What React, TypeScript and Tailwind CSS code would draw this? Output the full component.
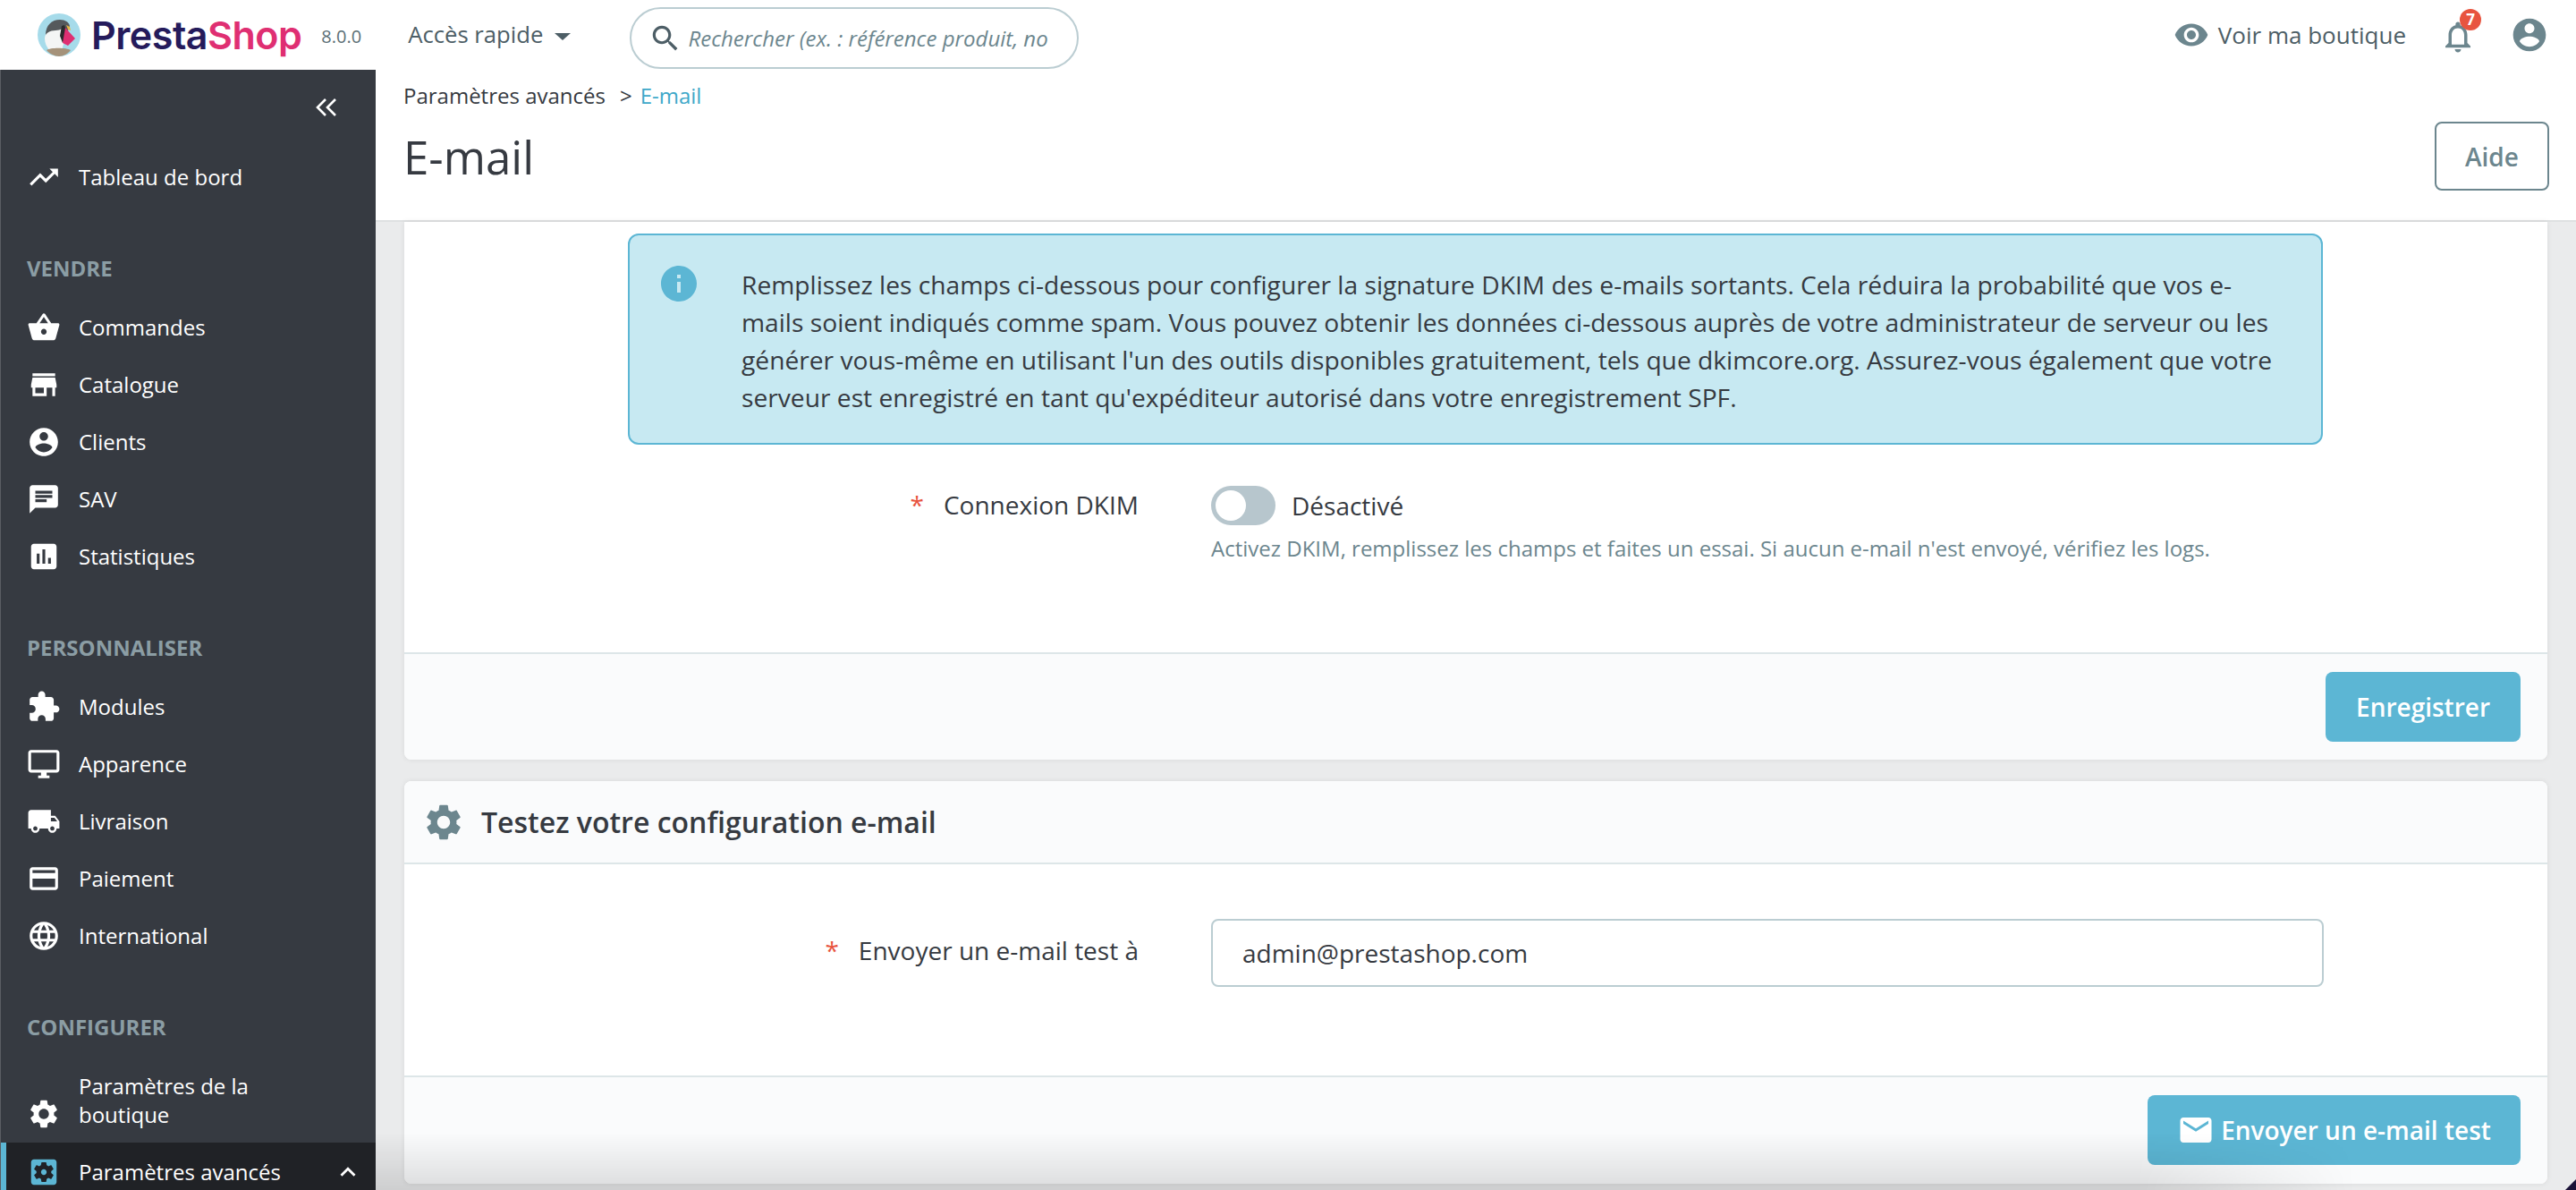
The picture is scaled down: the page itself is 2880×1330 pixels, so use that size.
import React from 'react';

const ICONS = {
  trending: 'M16 6l2.29 2.29-4.88 4.88-4-4L2 16.59 3.41 18l6-6 4 4 6.3-6.29L22 12V6z',
  basket: 'M17.21 9l-4.38-6.56c-.19-.28-.51-.42-.83-.42-.32 0-.64.14-.83.43L6.79 9H2c-.55 0-1 .45-1 1 0 .09.01.18.04.27l2.54 9.27c.23.84 1 1.46 1.92 1.46h13c.92 0 1.69-.62 1.93-1.46l2.54-9.27L23 10c0-.55-.45-1-1-1h-4.79zM9 9l3-4.4L15 9H9zm3 8c-1.1 0-2-.9-2-2s.9-2 2-2 2 .9 2 2-.9 2-2 2z',
  store: 'M20 4H4v2h16V4zm1 10v-2l-1-5H4l-1 5v2h1v6h10v-6h4v6h2v-6h1zm-9 4H6v-4h6v4z',
  account: 'M12 2C6.48 2 2 6.48 2 12s4.48 10 10 10 10-4.48 10-10S17.52 2 12 2zm0 3c1.66 0 3 1.34 3 3s-1.34 3-3 3-3-1.34-3-3 1.34-3 3-3zm0 14.2c-2.5 0-4.71-1.28-6-3.22.03-1.99 4-3.08 6-3.08 1.99 0 5.97 1.09 6 3.08-1.29 1.94-3.5 3.22-6 3.22z',
  chat: 'M20 2H4c-1.1 0-1.99.9-1.99 2L2 22l4-4h14c1.1 0 2-.9 2-2V4c0-1.1-.9-2-2-2zM6 9h12v2H6V9zm8 5H6v-2h8v2zm4-6H6V6h12v2z',
  stats: 'M19 3H5c-1.1 0-2 .9-2 2v14c0 1.1.9 2 2 2h14c1.1 0 2-.9 2-2V5c0-1.1-.9-2-2-2zM9 17H7v-7h2v7zm4 0h-2V7h2v10zm4 0h-2v-4h2v4z',
  puzzle: 'M20.5 11H19V7c0-1.1-.9-2-2-2h-4V3.5C13 2.12 11.88 1 10.5 1S8 2.12 8 3.5V5H4c-1.1 0-1.99.9-1.99 2v3.8H3.5c1.49 0 2.7 1.21 2.7 2.7s-1.21 2.7-2.7 2.7H2V20c0 1.1.9 2 2 2h3.8v-1.5c0-1.49 1.21-2.7 2.7-2.7 1.49 0 2.7 1.21 2.7 2.7V22H17c1.1 0 2-.9 2-2v-4h1.5c1.38 0 2.5-1.12 2.5-2.5S21.88 11 20.5 11z',
  desktop: 'M21 2H3c-1.1 0-2 .9-2 2v12c0 1.1.9 2 2 2h7v2H8v2h8v-2h-2v-2h7c1.1 0 2-.9 2-2V4c0-1.1-.9-2-2-2zm0 14H3V4h18v12z',
  truck: 'M20 8h-3V4H3c-1.1 0-2 .9-2 2v11h2c0 1.66 1.34 3 3 3s3-1.34 3-3h6c0 1.66 1.34 3 3 3s3-1.34 3-3h2v-5l-3-4zM6 18.5c-.83 0-1.5-.67-1.5-1.5s.67-1.5 1.5-1.5 1.5.67 1.5 1.5-.67 1.5-1.5 1.5zm13.5-9l1.96 2.5H17V9.5h2.5zm-1.5 9c-.83 0-1.5-.67-1.5-1.5s.67-1.5 1.5-1.5 1.5.67 1.5 1.5-.67 1.5-1.5 1.5z',
  card: 'M20 4H4c-1.11 0-1.99.89-1.99 2L2 18c0 1.11.89 2 2 2h16c1.11 0 2-.89 2-2V6c0-1.11-.89-2-2-2zm0 14H4v-6h16v6zm0-10H4V6h16v2z',
  globe: 'M11.99 2C6.47 2 2 6.48 2 12s4.47 10 9.99 10C17.52 22 22 17.52 22 12S17.52 2 11.99 2zm6.93 6h-2.95c-.32-1.25-.78-2.45-1.38-3.56 1.84.63 3.37 1.91 4.33 3.56zM12 4.04c.83 1.2 1.48 2.53 1.91 3.96h-3.82c.43-1.43 1.08-2.76 1.91-3.96zM4.26 14C4.1 13.36 4 12.69 4 12s.1-1.36.26-2h3.38c-.08.66-.14 1.32-.14 2 0 .68.06 1.34.14 2H4.26zm.82 2h2.95c.32 1.25.78 2.45 1.38 3.56-1.84-.63-3.37-1.9-4.33-3.56zm2.95-8H5.08c.96-1.66 2.49-2.93 4.33-3.56C8.81 5.55 8.35 6.75 8.03 8zM12 19.96c-.83-1.2-1.48-2.53-1.91-3.96h3.82c-.43 1.43-1.08 2.76-1.91 3.96zM14.34 14H9.66c-.09-.66-.16-1.32-.16-2 0-.68.07-1.35.16-2h4.68c.09.65.16 1.32.16 2 0 .68-.07 1.34-.16 2zm.25 5.56c.6-1.11 1.06-2.31 1.38-3.56h2.95c-.96 1.65-2.49 2.93-4.33 3.56zM16.36 14c.08-.66.14-1.32.14-2 0-.68-.06-1.34-.14-2h3.38c.16.64.26 1.31.26 2s-.1 1.36-.26 2h-3.38z',
  settings: 'M19.14 12.94c.04-.3.06-.61.06-.94 0-.32-.02-.64-.07-.94l2.03-1.58c.18-.14.23-.41.12-.61l-1.92-3.32c-.12-.22-.37-.29-.59-.22l-2.39.96c-.5-.38-1.03-.7-1.62-.94l-.36-2.54c-.04-.24-.24-.41-.48-.41h-3.84c-.24 0-.43.17-.47.41l-.36 2.54c-.59.24-1.13.57-1.62.94l-2.39-.96c-.22-.08-.47 0-.59.22L2.74 8.87c-.12.21-.08.47.12.61l2.03 1.58c-.05.3-.09.63-.09.94s.02.64.07.94l-2.03 1.58c-.18.14-.23.41-.12.61l1.92 3.32c.12.22.37.29.59.22l2.39-.96c.5.38 1.03.7 1.62.94l.36 2.54c.05.24.24.41.48.41h3.84c.24 0 .44-.17.47-.41l.36-2.54c.59-.24 1.13-.56 1.62-.94l2.39.96c.22.08.47 0 .59-.22l1.92-3.32c.12-.22.07-.47-.12-.61l-2.01-1.58zM12 15.6c-1.98 0-3.6-1.62-3.6-3.6s1.62-3.6 3.6-3.6 3.6 1.62 3.6 3.6-1.62 3.6-3.6 3.6z',
  advanced: 'M12 10c-1.1 0-2 .9-2 2s.9 2 2 2 2-.9 2-2-.9-2-2-2zm7-7H5c-1.11 0-2 .9-2 2v14c0 1.1.89 2 2 2h14c1.11 0 2-.9 2-2V5c0-1.1-.89-2-2-2zm-1.75 9c0 .23-.02.46-.05.68l1.48 1.16c.13.11.17.3.08.45l-1.4 2.42c-.09.15-.27.21-.43.15l-1.74-.7c-.36.28-.76.51-1.18.69l-.26 1.85c-.03.17-.18.3-.35.3h-2.8c-.17 0-.32-.13-.35-.29l-.26-1.85c-.43-.18-.82-.41-1.18-.69l-1.74.7c-.16.06-.34 0-.43-.15l-1.4-2.42c-.09-.15-.05-.34.08-.45l1.48-1.16c-.03-.23-.05-.46-.05-.69 0-.23.02-.46.05-.68l-1.48-1.16c-.13-.11-.17-.3-.08-.45l1.4-2.42c.09-.15.27-.21.43-.15l1.74.7c.36-.28.76-.51 1.18-.69l.26-1.85c.03-.17.18-.3.35-.3h2.8c.17 0 .32.13.35.29l.26 1.85c.43.18.82.41 1.18.69l1.74-.7c.16-.06.34 0 .43.15l1.4 2.42c.09.15.05.34-.08.45l-1.48 1.16c.03.23.05.46.05.69z',
  arrowUp: 'M7.41 15.41L12 10.83l4.59 4.58L18 14l-6-6-6 6z',
  eye: 'M12 4.5C7 4.5 2.73 7.61 1 12c1.73 4.39 6 7.5 11 7.5s9.27-3.11 11-7.5c-1.73-4.39-6-7.5-11-7.5zM12 17c-2.76 0-5-2.24-5-5s2.24-5 5-5 5 2.24 5 5-2.24 5-5 5zm0-8c-1.66 0-3 1.34-3 3s1.34 3 3 3 3-1.34 3-3-1.34-3-3-3z',
  bell: 'M12 22c1.1 0 2-.9 2-2h-4c0 1.1.9 2 2 2zm6-6v-5c0-3.07-1.63-5.64-4.5-6.32V4c0-.83-.67-1.5-1.5-1.5s-1.5.67-1.5 1.5v.68C7.64 5.36 6 7.92 6 11v5l-2 2v1h16v-1l-2-2zm-2 1H8v-6c0-2.48 1.51-4.5 4-4.5s4 2.02 4 4.5v6z',
  info: 'M12 2C6.48 2 2 6.48 2 12s4.48 10 10 10 10-4.48 10-10S17.52 2 12 2zm1 15h-2v-6h2v6zm0-8h-2V7h2v2z',
  mail: 'M20 4H4c-1.1 0-1.99.9-1.99 2L2 18c0 1.1.9 2 2 2h16c1.1 0 2-.9 2-2V6c0-1.1-.9-2-2-2zm0 4l-8 5-8-5V6l8 5 8-5v2z',
  search: 'M15.5 14h-.79l-.28-.27C15.41 12.59 16 11.11 16 9.5 16 5.91 13.09 3 9.5 3S3 5.91 3 9.5 5.91 16 9.5 16c1.61 0 3.09-.59 4.23-1.57l.27.28v.79l5 4.99L20.49 19l-4.99-5zm-6 0C7.01 14 5 11.99 5 9.5S7.01 5 9.5 5 14 7.01 14 9.5 11.99 14 9.5 14z',
};

const Icon = ({ d, className }: { d: string; className: string }) => (
  <svg viewBox="0 0 24 24" fill="currentColor" className={className}>
    <path d={d} />
  </svg>
);

const Puffin = () => (
  <svg viewBox="0 0 48 48" className="w-[48px] h-[48px] shrink-0">
    <circle cx="24" cy="24" r="24" fill="#a6dbea" />
    <path d="M9 24C9 13 16 7 25 7c6 0 10 3 11 7l-3 8-12 1z" fill="#55595c" />
    <path d="M8 28c0-6 6-9 12-9 3 0 5-1 8-2l2 14-3 10H13c-3-4-5-8-5-13z" fill="#f4f5f5" />
    <path d="M27 14l3-1 3 9-5 11-3-8z" fill="#2b2a2c" />
    <path d="M31 16l11 12-8 8-6-3z" fill="#df2f72" />
    <path d="M32 13l4 2 1 4-3-1z" fill="#e8b33f" />
    <path d="M10 41c4-3 22-3 27 0-3 4-8 7-13 7s-11-3-14-7z" fill="#a5927a" />
  </svg>
);

const NavRow = ({ label, icon }: { label: string; icon: string }) => (
  <div className="flex items-center h-[64px] shrink-0 pl-[29px] text-white">
    <div className="w-[38px] flex justify-center shrink-0">
      <Icon d={icon} className="w-[38px] h-[38px] shrink-0" />
    </div>
    <span className="ml-[20px] text-[24px] leading-[32px]">{label}</span>
  </div>
);

const NavTitle = ({ label }: { label: string }) => (
  <div className="mt-[50px] mb-[14px] h-[40px] shrink-0 flex items-center pl-[29px] text-[24px] font-bold text-[#8b9da4] uppercase">
    {label}
  </div>
);

const Sidebar = () => (
  <aside className="w-[420px] shrink-0 bg-[#363a41] border-l border-[#5a5d63] overflow-hidden flex flex-col">
    <div className="h-[84px] shrink-0 flex items-center justify-end pr-[42px]">
      <svg viewBox="0 0 26 24" className="w-[26px] h-[24px]" fill="none" stroke="#fff" strokeWidth="2.6">
        <path d="M12 3L3 12l9 9M23 3l-9 9 9 9" />
      </svg>
    </div>
    <div className="mt-[4px] shrink-0">
      <NavRow label="Tableau de bord" icon={ICONS.trending} />
    </div>

    <NavTitle label="Vendre" />
    <NavRow label="Commandes" icon={ICONS.basket} />
    <NavRow label="Catalogue" icon={ICONS.store} />
    <NavRow label="Clients" icon={ICONS.account} />
    <NavRow label="SAV" icon={ICONS.chat} />
    <NavRow label="Statistiques" icon={ICONS.stats} />

    <NavTitle label="Personnaliser" />
    <NavRow label="Modules" icon={ICONS.puzzle} />
    <NavRow label="Apparence" icon={ICONS.desktop} />
    <NavRow label="Livraison" icon={ICONS.truck} />
    <NavRow label="Paiement" icon={ICONS.card} />
    <NavRow label="International" icon={ICONS.globe} />

    <NavTitle label="Configurer" />
    <div className="flex items-center h-[95px] shrink-0 pl-[29px] text-white">
      <div className="w-[38px] flex justify-center shrink-0 mt-[30px]">
        <Icon d={ICONS.settings} className="w-[38px] h-[38px] shrink-0" />
      </div>
      <span className="ml-[20px] text-[24px] leading-[32px]">
        Paramètres de la
        <br />
        boutique
      </span>
    </div>
    <div className="flex items-center h-[65px] shrink-0 border-l-[7px] border-[#5cb6d4] bg-[#202226] pl-[23px] pr-[14px] text-white -ml-px">
      <div className="w-[38px] flex justify-center shrink-0">
        <Icon d={ICONS.advanced} className="w-[38px] h-[38px] text-[#5cb6d4] shrink-0" />
      </div>
      <span className="ml-[20px] text-[24px] flex-1">Paramètres avancés</span>
      <Icon d={ICONS.arrowUp} className="w-[34px] h-[34px]" />
    </div>
  </aside>
);

const TopBar = () => (
  <header className="h-[78px] shrink-0 bg-white flex items-center relative z-10">
    <div className="ml-[42px] flex items-center">
      <Puffin />
      <span className="ml-[12px] text-[43px] leading-none font-semibold tracking-[-0.5px] font-['Inter',sans-serif]">
        <span className="text-[#251b5b]">Presta</span>
        <span className="text-[#df2f72]">Shop</span>
      </span>
    </div>
    <span className="ml-[22px] mt-[4px] text-[20px] text-[#5c6f76]">8.0.0</span>
    <span className="ml-[52px] text-[25.7px] text-[#4d5e66]">Accès rapide</span>
    <span className="ml-[13px] mt-[3px] w-0 h-0 border-x-[9px] border-x-transparent border-t-[8px] border-t-[#4d5e66]" />
    <div className="ml-[66px] mt-[7px] w-[502px] h-[69px] flex items-center rounded-full border-2 border-[#bbcdd2] pl-[19px]">
      <Icon d={ICONS.search} className="w-[38px] h-[38px] text-[#4d5e66] shrink-0" />
      <span className="ml-[6px] text-[24px] italic text-[#6c868e] whitespace-nowrap">
        Rechercher (ex. : référence produit, no
      </span>
    </div>
    <div className="ml-auto flex items-center">
      <Icon d={ICONS.eye} className="w-[40px] h-[40px] text-[#6c868e]" />
      <span className="ml-[10px] text-[26px] text-[#4d5e66]">Voir ma boutique</span>
      <div className="relative ml-[39px] w-[38px] h-[38px]">
        <Icon d={ICONS.bell} className="w-[42px] h-[42px] -ml-[2px] text-[#6c868e]" />
        <span className="absolute -top-[10px] left-[21px] w-[24px] h-[24px] rounded-full bg-[#e8543f] text-white text-[17px] font-bold flex items-center justify-center">
          7
        </span>
      </div>
      <Icon d={ICONS.account} className="ml-[39px] mr-[30px] w-[44px] h-[44px] text-[#6c868e]" />
    </div>
  </header>
);

const PageHead = () => (
  <div className="h-[170px] shrink-0 bg-white border-b-2 border-[#dfe1e2] pl-[31px] pr-[30px] flex justify-between">
    <div>
      <div className="mt-[12px] text-[24px] leading-[34px] text-[#363a41]">
        Paramètres avancés<span className="ml-[16px]">&gt;</span>
        <span className="ml-[9px] text-[#3ea8c9]">E-mail</span>
      </div>
      <h1 className="mt-[18px] text-[51px] leading-[66px] text-[#363a41]">E-mail</h1>
    </div>
    <button className="mt-[58px] w-[128px] h-[77px] rounded-[8px] border-2 border-[#6c868e] text-[28px] font-semibold text-[#6c868e]">
      Aide
    </button>
  </div>
);

const PrimaryButton = ({ children }: { children: React.ReactNode }) => (
  <button className="h-[78px] rounded-[8px] bg-[#5cb6d4] text-white text-[28px] font-semibold flex items-center">
    {children}
  </button>
);

const Required = ({ label }: { label: string }) => (
  <div className="w-[821px] shrink-0 text-right text-[28px] text-[#363a41]">
    <span className="text-[#e8543f] mr-[22px]">*</span>
    {label}
  </div>
);

export default function App() {
  return (
    <div className="w-[2880px] h-[1330px] overflow-hidden relative flex flex-col font-['Open_Sans',sans-serif] bg-[#eaebec]">
      <TopBar />
      <div className="flex flex-1 min-h-0">
        <Sidebar />
        <main className="flex-1 min-w-0 flex flex-col">
          <PageHead />
          <div className="px-[32px]">
            <section className="bg-white rounded-b-[8px] shadow-[0_0_6px_rgba(0,0,0,0.08)]">
              <div className="h-[481px] pt-[13px]">
                <div className="ml-[250px] mr-[251px] h-[236px] rounded-[12px] border-2 border-[#5cb6d4] bg-[#c7e9f2] flex pl-[35px] pr-[45px] pt-[34px]">
                  <Icon d={ICONS.info} className="w-[48px] h-[48px] -ml-[4px] -mt-[4px] text-[#5cb6d4] shrink-0" />
                  <p className="ml-[46px] text-[28.2px] leading-[42px] text-[#363a41]">
                    Remplissez les champs ci-dessous pour configurer la signature DKIM des e-mails sortants. Cela réduira la probabilité que vos e-mails soient indiqués comme spam. Vous pouvez obtenir les données ci-dessous auprès de votre administrateur de serveur ou les générer vous-même en utilisant l'un des outils disponibles gratuitement, tels que dkimcore.org. Assurez-vous également que votre serveur est enregistré en tant qu'expéditeur autorisé dans votre enregistrement SPF.
                  </p>
                </div>
                <div className="mt-[46px] flex">
                  <Required label="Connexion DKIM" />
                  <div className="ml-[81px]">
                    <div className="flex items-center">
                      <div className="w-[72px] h-[44px] rounded-full bg-[#b7c6cd] p-[5px]">
                        <div className="w-[34px] h-[34px] rounded-full bg-white" />
                      </div>
                      <span className="ml-[18px] text-[28px] text-[#363a41]">Désactivé</span>
                    </div>
                    <p className="mt-[10px] text-[24px] leading-[32px] text-[#6c868e]">
                      Activez DKIM, remplissez les champs et faites un essai. Si aucun e-mail n'est envoyé, vérifiez les logs.
                    </p>
                  </div>
                </div>
              </div>
              <div className="h-[120px] border-t-2 border-[#dde6e8] bg-[#fafbfc] rounded-b-[8px] flex justify-end pt-[20px] pr-[30px]">
                <PrimaryButton>
                  <span className="w-[218px] text-center">Enregistrer</span>
                </PrimaryButton>
              </div>
            </section>

            <section className="mt-[24px] bg-white rounded-[8px] shadow-[0_0_6px_rgba(0,0,0,0.08)]">
              <div className="h-[93px] border-b-2 border-[#dde6e8] bg-[#fafbfc] rounded-t-[8px] flex items-center pl-[20px]">
                <Icon d={ICONS.settings} className="w-[48px] h-[48px] text-[#6c868e]" />
                <h2 className="ml-[18px] text-[32px] font-semibold text-[#363a41]">Testez votre configuration e-mail</h2>
              </div>
              <div className="h-[238px] border-b-2 border-[#dde6e8] pt-[61px] flex items-start">
                <div className="pt-[14px]">
                  <Required label="Envoyer un e-mail test à" />
                </div>
                <div className="ml-[81px] w-[1244px] h-[76px] rounded-[8px] border-2 border-[#bbcdd2] flex items-center pl-[33px] text-[28px] text-[#363a41]">
                  admin@prestashop.com
                </div>
              </div>
              <div className="h-[119px] bg-[#fafbfc] rounded-b-[8px] flex justify-end pt-[20px] pr-[30px]">
                <PrimaryButton>
                  <span className="w-[417px] flex items-center justify-center">
                    <Icon d={ICONS.mail} className="w-[42px] h-[42px] mr-[7px]" />
                    Envoyer un e-mail test
                  </span>
                </PrimaryButton>
              </div>
            </section>
          </div>
        </main>
      </div>
      {/* window shadow that falls over the bottom of the content */}
      <div className="absolute left-[420px] right-0 bottom-0 h-[64px] bg-linear-to-b from-transparent to-black/12 [mask-image:linear-gradient(to_right,black_80%,transparent_90%)] pointer-events-none" />
      <div className="absolute right-0 bottom-0 w-[12px] h-[12px] bg-[#1a1238] [clip-path:polygon(100%_0,100%_100%,0_100%)] pointer-events-none" />
    </div>
  );
}
